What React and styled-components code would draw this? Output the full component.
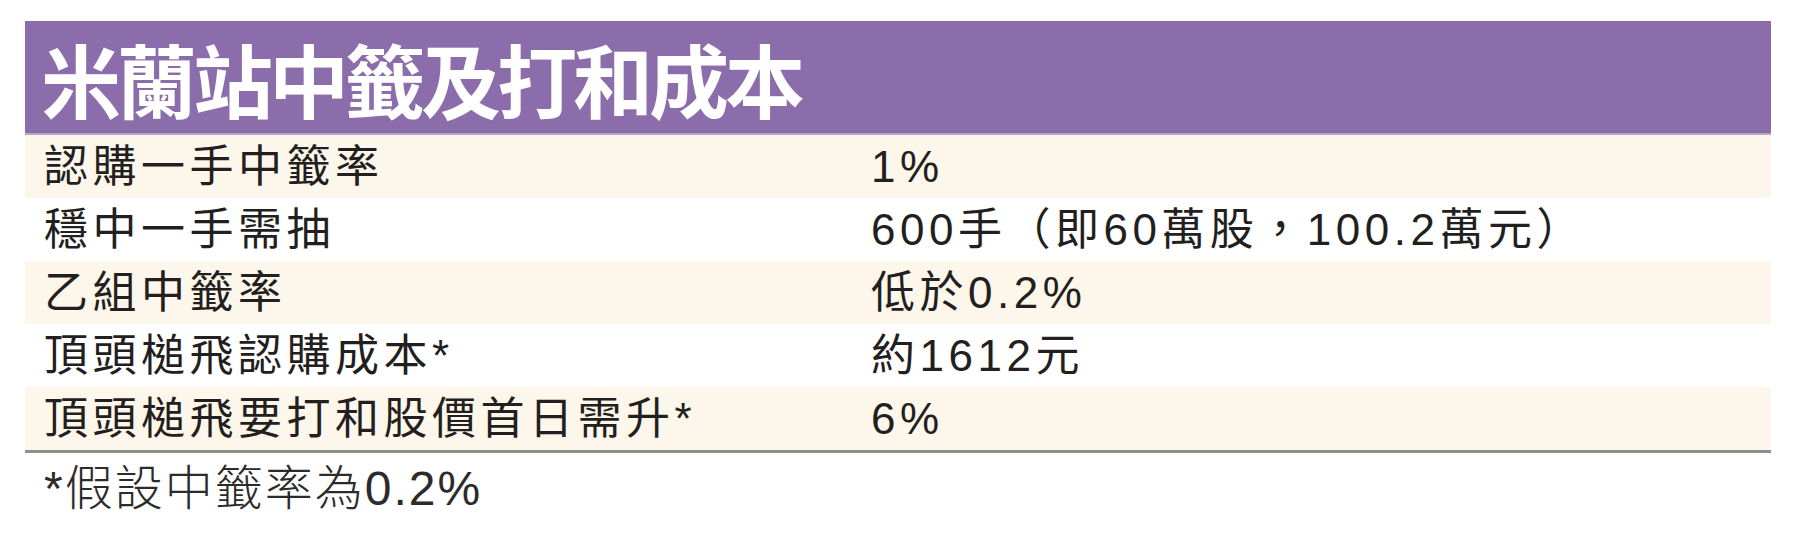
import React from "react";
import styled, { createGlobalStyle } from "styled-components";

const rows = [
  { label: "認購一手中籤率", value: "1%" },
  { label: "穩中一手需抽", value: "600手（即60萬股，100.2萬元）" },
  { label: "乙組中籤率", value: "低於0.2%" },
  { label: "頂頭槌飛認購成本*", value: "約1612元" },
  { label: "頂頭槌飛要打和股價首日需升*", value: "6%" },
];

export default function App() {
  return (
    <>
      <GlobalStyle />
      <Card>
        <Header>
          <Title>米蘭站中籤及打和成本</Title>
        </Header>
        <Table>
          {rows.map((row, i) => (
            <Row key={row.label} shaded={i % 2 === 0}>
              <Cell>{row.label}</Cell>
              <Cell>{row.value}</Cell>
            </Row>
          ))}
        </Table>
        <Note>*假設中籤率為0.2%</Note>
      </Card>
    </>
  );
}

const GlobalStyle = createGlobalStyle`
  html, body {
    margin: 0;
    padding: 0;
    background: #ffffff;
  }
  body {
    font-family: "Liberation Sans", "Noto Sans CJK TC", sans-serif;
    color: #231f20;
  }
`;

const Card = styled.div`
  display: flex;
  flex-direction: column;
  width: 1746px;
  margin: 21px 0 0 25px;
`;

const Header = styled.div`
  display: flex;
  align-items: center;
  height: 112px;
  padding-left: 16px;
  background: #8c6dab;
  border-bottom: 2px solid #b9a3cc;
`;

const Title = styled.h1`
  margin: 0;
  font-family: "Noto Sans CJK TC", sans-serif;
  font-size: 80px;
  font-weight: 700;
  letter-spacing: -4px;
  line-height: 1;
  color: #ffffff;
`;

const Table = styled.div`
  display: flex;
  flex-direction: column;
  border-bottom: 3px solid #8f8f8f;
`;

const Row = styled.div`
  display: grid;
  grid-template-columns: 827px 1fr;
  align-items: center;
  height: 63px;
  padding-left: 19px;
  background: ${(p) => (p.shaded ? "#fdf6ea" : "#ffffff")};
`;

const Cell = styled.div`
  font-family: "Liberation Sans", "Noto Sans CJK TC", sans-serif;
  font-size: 44px;
  letter-spacing: 4.5px;
  line-height: 1;
  white-space: nowrap;
  color: #231f20;
`;

const Note = styled.p`
  margin: 12px 0 0 19px;
  font-family: "Liberation Sans", "Noto Sans CJK TC", sans-serif;
  font-size: 48px;
  font-weight: 300;
  letter-spacing: 2px;
  line-height: 1;
  color: #2b2b2b;
`;
